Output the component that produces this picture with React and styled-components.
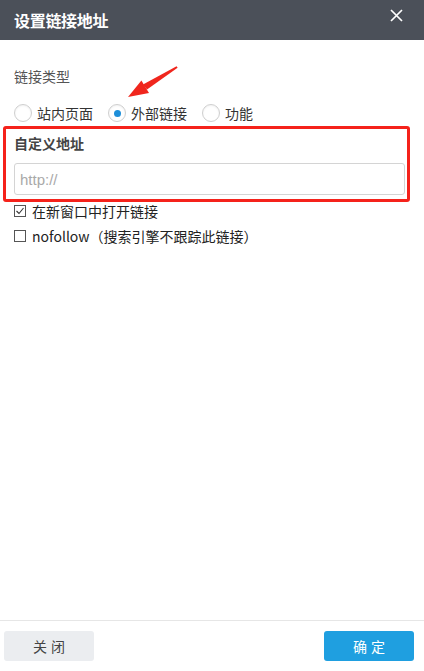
import React from 'react';
import styled, { createGlobalStyle } from 'styled-components';

const GlobalStyle = createGlobalStyle`
  html, body, #root {
    margin: 0;
    padding: 0;
    height: 100%;
  }
  body {
    font-family: "Noto Sans CJK SC", "Noto Sans", sans-serif;
    background: #fff;
    color: #333;
  }
`;

const Dialog = styled.div`
  position: relative;
  display: flex;
  flex-direction: column;
  height: 100vh;
  background: #fff;
`;

const Header = styled.div`
  height: 40px;
  flex: none;
  display: flex;
  align-items: center;
  justify-content: space-between;
  padding: 0 21px 0 14px;
  background: #4b5059;
  color: #fff;
`;

const Title = styled.h1`
  margin: 0;
  font-size: 16px;
  font-weight: bold;
  letter-spacing: -0.3px;
`;

const Close = styled.span`
  display: flex;
  width: 13px;
  height: 13px;
  margin-top: -10px;
`;

const Body = styled.div`
  flex: 1;
  padding: 26px 0 0;
`;

const Label = styled.div`
  padding-left: 14px;
  font-size: 14px;
  line-height: 20px;
  color: #555;
`;

const RadioRow = styled.div`
  display: flex;
  align-items: center;
  gap: 15px;
  padding: 17px 0 0 14px;
  height: 20px;
`;

const RadioItem = styled.label`
  display: flex;
  align-items: center;
  gap: 5px;
  font-size: 14px;
  color: #333;
`;

const RadioDot = styled.span`
  width: 18px;
  height: 18px;
  box-sizing: border-box;
  border-radius: 50%;
  border: 1px solid #cfcfcf;
  background: #fff;
  display: flex;
  align-items: center;
  justify-content: center;
  box-shadow: inset 0 1px 2px rgba(0, 0, 0, 0.06);

  &::after {
    content: '';
    display: ${p => (p.checked ? 'block' : 'none')};
    width: 7px;
    height: 7px;
    border-radius: 50%;
    background: #1e8fd9;
  }
`;

const Highlight = styled.div`
  margin: 3px 14px 0 3px;
  border: 3px solid #f5221b;
  border-radius: 3px;
  padding: 4px 2px 4px 8px;
`;

const FieldLabel = styled.div`
  font-size: 14px;
  font-weight: bold;
  color: #444;
  line-height: 20px;
`;

const Input = styled.input`
  display: block;
  box-sizing: border-box;
  width: 100%;
  height: 32px;
  margin-top: 10px;
  border: 1px solid #d4d4d4;
  border-radius: 3px;
  padding: 0 5px;
  font-family: "Liberation Sans", Arial, sans-serif;
  font-size: 15px;
  color: #333;
  outline: none;

  &::placeholder {
    color: #a9a9a9;
  }
`;

const CheckRow = styled.label`
  display: flex;
  align-items: center;
  gap: 6px;
  padding-left: 14px;
  height: 20px;
  margin-top: ${p => p.gap}px;
  font-size: 14px;
  color: #222;
`;

const Box = styled.span`
  width: 12px;
  height: 12px;
  box-sizing: border-box;
  border: 1px solid #555;
  display: flex;
  align-items: center;
  justify-content: center;
`;

const Footer = styled.div`
  flex: none;
  height: 51px;
  box-sizing: border-box;
  border-top: 1px solid #e6e6e6;
  display: flex;
  justify-content: space-between;
  padding: 10px 10px 0 4px;
`;

const Button = styled.button`
  width: 90px;
  height: 30px;
  border: none;
  border-radius: 3px;
  font-family: inherit;
  font-size: 14px;
  letter-spacing: 4px;
  text-indent: 4px;
  background: ${p => (p.primary ? '#1f9fe0' : '#ebedf0')};
  color: ${p => (p.primary ? '#fff' : '#444')};
`;

const Arrow = styled.svg`
  position: absolute;
  left: 120px;
  top: 60px;
`;

export default function App() {
  return (
    <Dialog>
      <GlobalStyle />
      <Header>
        <Title>设置链接地址</Title>
        <Close>
          <svg width="13" height="13" viewBox="0 0 13 13">
            <path d="M1 1L12 12M12 1L1 12" stroke="#fff" strokeWidth="1.7" />
          </svg>
        </Close>
      </Header>
      <Body>
        <Label>链接类型</Label>
        <RadioRow>
          <RadioItem><RadioDot />站内页面</RadioItem>
          <RadioItem><RadioDot checked />外部链接</RadioItem>
          <RadioItem><RadioDot />功能</RadioItem>
        </RadioRow>
        <Highlight>
          <FieldLabel>自定义地址</FieldLabel>
          <Input placeholder="http://" />
        </Highlight>
        <CheckRow gap={-1}>
          <Box>
            <svg width="10" height="10" viewBox="0 0 10 10">
              <path d="M1.5 5L4 7.5L8.5 2" fill="none" stroke="#333" strokeWidth="1.1" />
            </svg>
          </Box>
          在新窗口中打开链接
        </CheckRow>
        <CheckRow gap={5}>
          <Box />
          nofollow（搜索引擎不跟踪此链接）
        </CheckRow>
      </Body>
      <Footer>
        <Button>关闭</Button>
        <Button primary>确定</Button>
      </Footer>
      <Arrow width="70" height="50" viewBox="0 0 70 50">
        <path d="M56.6 6.2L57.6 7.8L27 29.5L23 24.5Z" fill="#f0261d" />
        <path d="M8 37L21.4 20.5L29 33Z" fill="#f0261d" />
      </Arrow>
    </Dialog>
  );
}
